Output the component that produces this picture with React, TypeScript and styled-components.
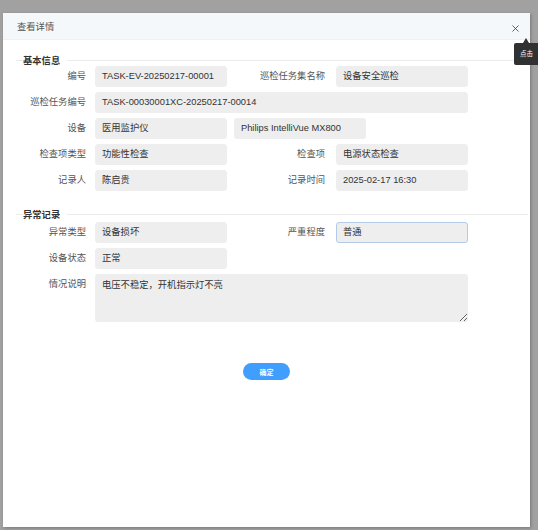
import React from 'react';
import styled, { createGlobalStyle } from 'styled-components';
import { X } from 'lucide-react';

const GlobalStyle = createGlobalStyle`
  html, body {
    margin: 0;
    padding: 0;
    overflow: hidden;
    background: #a1a1a1;
    font-family: "Liberation Sans", "Noto Sans CJK SC", sans-serif;
  }
`;

const Overlay = styled.div`
  width: 538px;
  height: 530px;
  box-sizing: border-box;
  padding: 13px 0 0 3px;
`;

const Dialog = styled.div`
  position: relative;
  width: 527px;
  height: 514px;
  background: #ffffff;
  box-shadow: 1px 1px 3px rgba(0, 0, 0, 0.25);
  display: flex;
  flex-direction: column;
`;

const Header = styled.div`
  height: 27px;
  box-sizing: border-box;
  display: flex;
  align-items: center;
  justify-content: space-between;
  padding: 0 9px 0 14px;
  background: #f5f8fb;
  border-bottom: 1px solid #edf0f4;
`;

const Title = styled.span`
  font-size: 9.3px;
  color: #555;
`;

const CloseButton = styled.button`
  border: 0;
  background: none;
  padding: 0;
  display: flex;
  color: #444;
  margin-top: 5px;
`;

const Tooltip = styled.div`
  position: absolute;
  top: 30px;
  left: 511px;
  height: 22px;
  width: 40px;
  box-sizing: border-box;
  padding-left: 6px;
  background: #303133;
  color: #fff;
  font-size: 6.5px;
  line-height: 22px;
  border-radius: 2px;

  &::before {
    content: '';
    position: absolute;
    top: -5px;
    left: 9px;
    border-left: 3px solid transparent;
    border-right: 3px solid transparent;
    border-bottom: 5px solid #303133;
  }
`;

const Body = styled.div`
  padding: 14px 2px 0 13px;
  display: flex;
  flex-direction: column;
`;

const SectionTitle = styled.div<{ $gap: number }>`
  display: flex;
  align-items: center;
  height: 12px;
  margin-top: ${(p) => p.$gap}px;
  font-size: 9.3px;
  font-weight: bold;
  color: #333;

  &::before {
    content: '';
    width: 7px;
    border-top: 1px solid #ebebeb;
  }

  &::after {
    content: '';
    flex: 1;
    border-top: 1px solid #ebebeb;
    margin-left: 7px;
  }
`;

const Rows = styled.div<{ $top: number }>`
  display: flex;
  flex-direction: column;
  gap: 5px;
  margin-top: ${(p) => p.$top}px;
`;

const Row = styled.div`
  display: flex;
  align-items: flex-start;
`;

const Label = styled.div<{ $w: number; $pad: number }>`
  width: ${(p) => p.$w}px;
  box-sizing: border-box;
  padding-right: ${(p) => p.$pad}px;
  text-align: right;
  font-size: 9.3px;
  line-height: 21px;
  color: #555;
  white-space: nowrap;
`;

const Field = styled.div<{ $w: number; $focus?: boolean; $ml?: number }>`
  width: ${(p) => p.$w}px;
  height: 21px;
  box-sizing: border-box;
  margin-left: ${(p) => p.$ml ?? 0}px;
  padding: 0 6px;
  background: #eeeeee;
  border: 1px solid ${(p) => (p.$focus ? '#b3cbe6' : '#eeeeee')};
  border-radius: 3px;
  font-size: 9.3px;
  line-height: 19px;
  color: #333;
  white-space: nowrap;
  overflow: hidden;
`;

const Remark = styled.textarea`
  width: 373px;
  height: 48px;
  box-sizing: border-box;
  padding: 5px 7px;
  background: #eeeeee;
  border: 0;
  border-radius: 3px;
  font-family: "Liberation Sans", "Noto Sans CJK SC", sans-serif;
  font-size: 9.3px;
  line-height: 12px;
  color: #333;
  outline: none;
`;

const Footer = styled.div`
  display: flex;
  justify-content: center;
  margin: 41px 11px 0 0;
`;

const ConfirmButton = styled.button`
  width: 47px;
  height: 17px;
  border: 0;
  border-radius: 9px;
  background: #409eff;
  color: #fff;
  font-family: "Liberation Sans", "Noto Sans CJK SC", sans-serif;
  font-size: 7px;
  font-weight: bold;
  padding: 0;
`;

const L1 = 79;
const L2 = 109;

export default function App() {
  return (
    <>
      <GlobalStyle />
      <Overlay>
        <Dialog>
          <Header>
            <Title>查看详情</Title>
            <CloseButton>
              <X size={11} strokeWidth={1.8} />
            </CloseButton>
          </Header>
          <Tooltip>点击</Tooltip>
          <Body>
            <SectionTitle $gap={0}>基本信息</SectionTitle>
            <Rows $top={0}>
              <Row>
                <Label $w={L1} $pad={9}>编号</Label>
                <Field $w={132}>TASK-EV-20250217-00001</Field>
                <Label $w={L2} $pad={11}>巡检任务集名称</Label>
                <Field $w={132}>设备安全巡检</Field>
              </Row>
              <Row>
                <Label $w={L1} $pad={9}>巡检任务编号</Label>
                <Field $w={373}>TASK-00030001XC-20250217-00014</Field>
              </Row>
              <Row>
                <Label $w={L1} $pad={9}>设备</Label>
                <Field $w={132}>医用监护仪</Field>
                <Field $w={132} $ml={7}>Philips IntelliVue MX800</Field>
              </Row>
              <Row>
                <Label $w={L1} $pad={9}>检查项类型</Label>
                <Field $w={132}>功能性检查</Field>
                <Label $w={L2} $pad={11}>检查项</Label>
                <Field $w={132}>电源状态检查</Field>
              </Row>
              <Row>
                <Label $w={L1} $pad={9}>记录人</Label>
                <Field $w={132}>陈启贵</Field>
                <Label $w={L2} $pad={11}>记录时间</Label>
                <Field $w={132}>2025-02-17 16:30</Field>
              </Row>
            </Rows>

            <SectionTitle $gap={17}>异常记录</SectionTitle>
            <Rows $top={2}>
              <Row>
                <Label $w={L1} $pad={9}>异常类型</Label>
                <Field $w={132}>设备损坏</Field>
                <Label $w={L2} $pad={11}>严重程度</Label>
                <Field $w={132} $focus>普通</Field>
              </Row>
              <Row>
                <Label $w={L1} $pad={9}>设备状态</Label>
                <Field $w={132}>正常</Field>
              </Row>
              <Row>
                <Label $w={L1} $pad={9}>情况说明</Label>
                <Remark readOnly defaultValue="电压不稳定，开机指示灯不亮" />
              </Row>
            </Rows>

            <Footer>
              <ConfirmButton>确定</ConfirmButton>
            </Footer>
          </Body>
        </Dialog>
      </Overlay>
    </>
  );
}
